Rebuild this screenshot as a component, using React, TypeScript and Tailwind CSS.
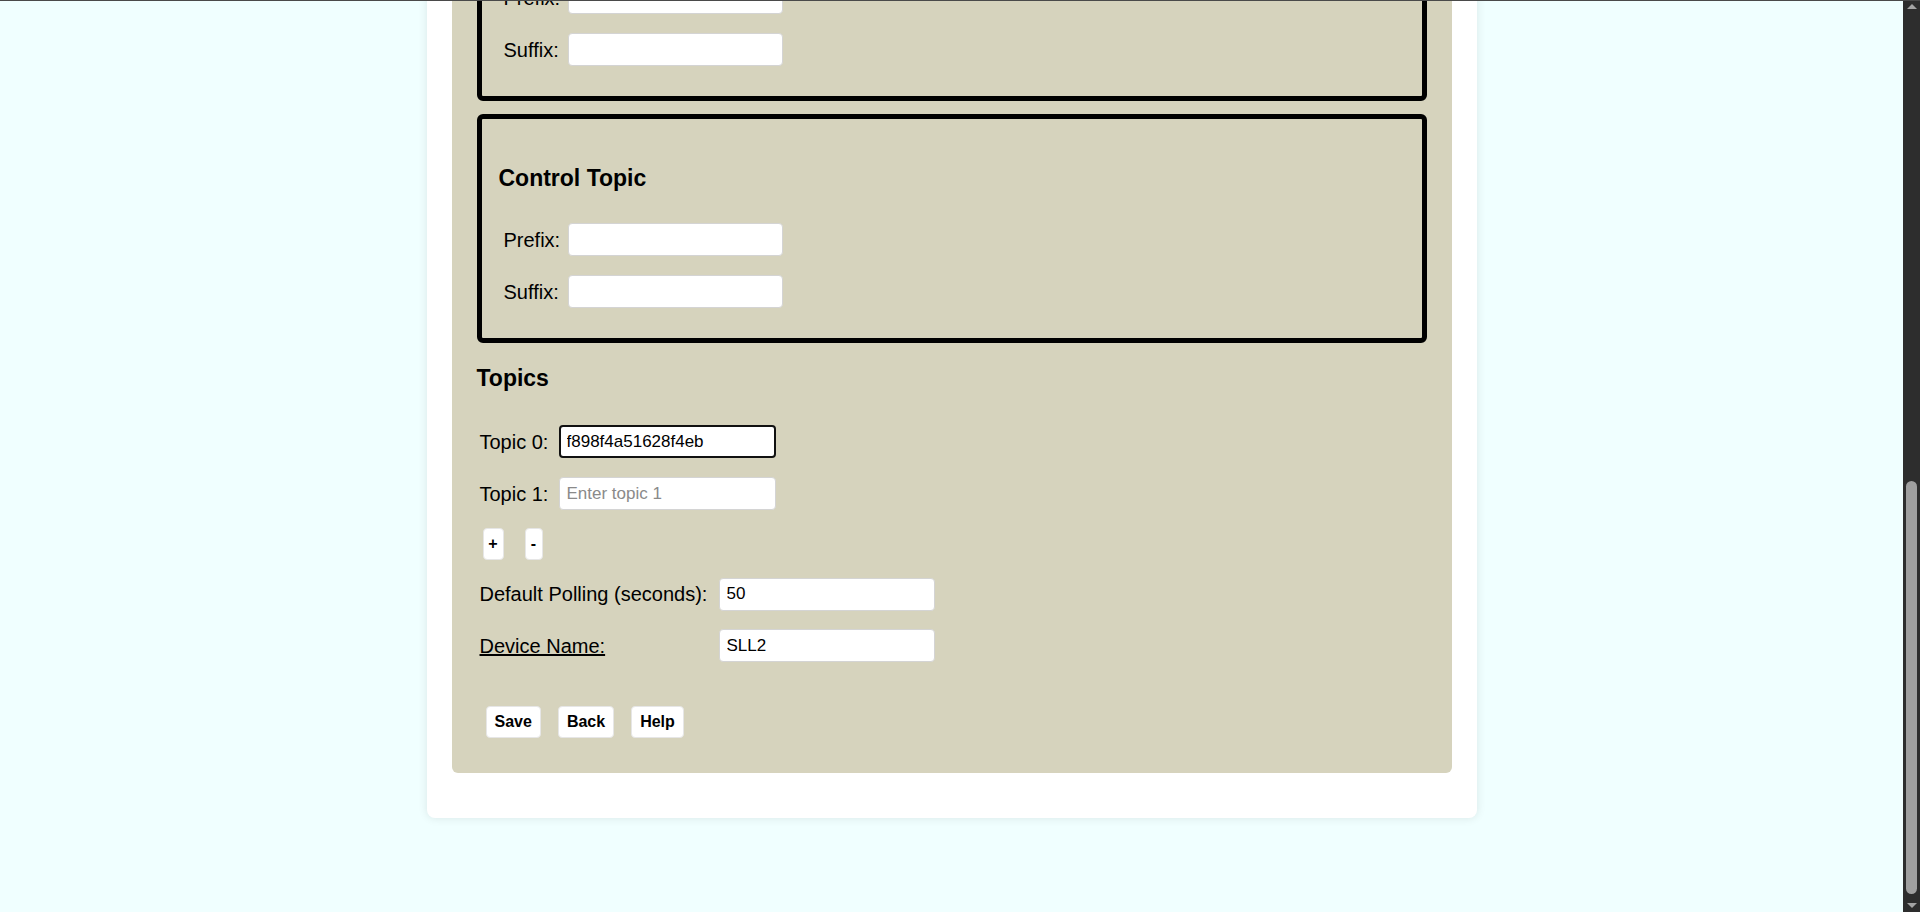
import React from "react";

const inputCls =
  "h-[33px] w-[215px] rounded-[4px] border border-[#d4d4d4] bg-white px-[7px] text-[17px] text-black outline-none placeholder:text-[#8a8a8a]";
const btnCls =
  "h-[32px] rounded-[4px] bg-white text-[16px] font-bold text-black border border-[#e6e6e6]";

function Box({ title }: { title: string }) {
  return (
    <div className="border-[5px] border-black rounded-[6px] pt-[46px] pb-[30px] px-[17px]">
      <h3 className="text-[23px] font-bold leading-[26px] mb-[32px]">{title}</h3>
      <div className="flex flex-col gap-[19px]">
        <div className="flex items-center h-[33px]">
          <span className="w-[69px] pl-[5px] text-[20px]">Prefix:</span>
          <input className={inputCls} />
        </div>
        <div className="flex items-center h-[33px]">
          <span className="w-[69px] pl-[5px] text-[20px]">Suffix:</span>
          <input className={inputCls} />
        </div>
      </div>
    </div>
  );
}

export default function App() {
  return (
    <div
      className="h-[912px] w-[1920px] flex bg-[#f0ffff] overflow-hidden relative"
      style={{ fontFamily: '"Liberation Sans", Arial, sans-serif' }}
    >
      <div className="absolute top-0 left-0 right-0 h-px bg-[#4a4a4a] z-10" />
      <div className="flex-1 flex flex-col justify-end overflow-hidden text-black">
        <div className="mx-auto w-[1050px] mb-[94px] bg-white rounded-[8px] shadow-[0_0_10px_rgba(0,0,0,0.1)] px-[25px] pb-[45px]">
          <div className="bg-[#d6d3bd] rounded-b-[6px] px-[25px] pb-[35px] pt-[20px]">
            <Box title="Data Topic" />
            <div className="h-[13px]" />
            <Box title="Control Topic" />
            <h3 className="text-[23px] font-bold leading-[26px] mt-[22px] mb-[34px]">Topics</h3>
            <div className="flex flex-col gap-[19px] pl-[3px]">
              <div className="flex items-center h-[33px]">
                <span className="w-[79px] text-[20px]">Topic 0:</span>
                <input
                  className="h-[33px] w-[217px] rounded-[4px] border-2 border-[#111] bg-white px-[6px] text-[17px] outline-none"
                  defaultValue="f898f4a51628f4eb"
                />
              </div>
              <div className="flex items-center h-[33px]">
                <span className="w-[79px] text-[20px]">Topic 1:</span>
                <input className={inputCls + " w-[217px]"} placeholder="Enter topic 1" />
              </div>
            </div>
            <div className="flex gap-[21px] mt-[18px] ml-[6px]">
              <button className={btnCls + " w-[21px]"}>+</button>
              <button className={btnCls + " w-[18px]"}>-</button>
            </div>
            <div className="flex flex-col gap-[19px] mt-[18px] pl-[3px]">
              <div className="flex items-center h-[32px]">
                <span className="w-[239px] text-[20px]">Default Polling (seconds):</span>
                <input className={inputCls + " w-[216px]"} defaultValue="50" />
              </div>
              <div className="flex items-center h-[33px]">
                <span className="w-[239px] text-[20px] underline">Device Name:</span>
                <input className={inputCls + " w-[216px]"} defaultValue="SLL2" />
              </div>
            </div>
            <div className="flex gap-[17px] mt-[44px] ml-[9px]">
              <button className={btnCls + " px-[8px]"}>Save</button>
              <button className={btnCls + " px-[8px]"}>Back</button>
              <button className={btnCls + " px-[8px]"}>Help</button>
            </div>
          </div>
        </div>
      </div>
      <div className="w-[17px] h-full bg-[#2d2d2d] flex flex-col items-center justify-between py-[4px] relative">
        <div className="w-0 h-0 border-l-[5px] border-r-[5px] border-b-[5px] border-l-transparent border-r-transparent border-b-[#a3a3a3]" />
        <div className="absolute left-[3px] top-[481px] w-[11px] h-[413px] rounded-full bg-[#9f9f9f]" />
        <div className="w-0 h-0 border-l-[5px] border-r-[5px] border-t-[5px] border-l-transparent border-r-transparent border-t-[#a3a3a3]" />
      </div>
    </div>
  );
}
